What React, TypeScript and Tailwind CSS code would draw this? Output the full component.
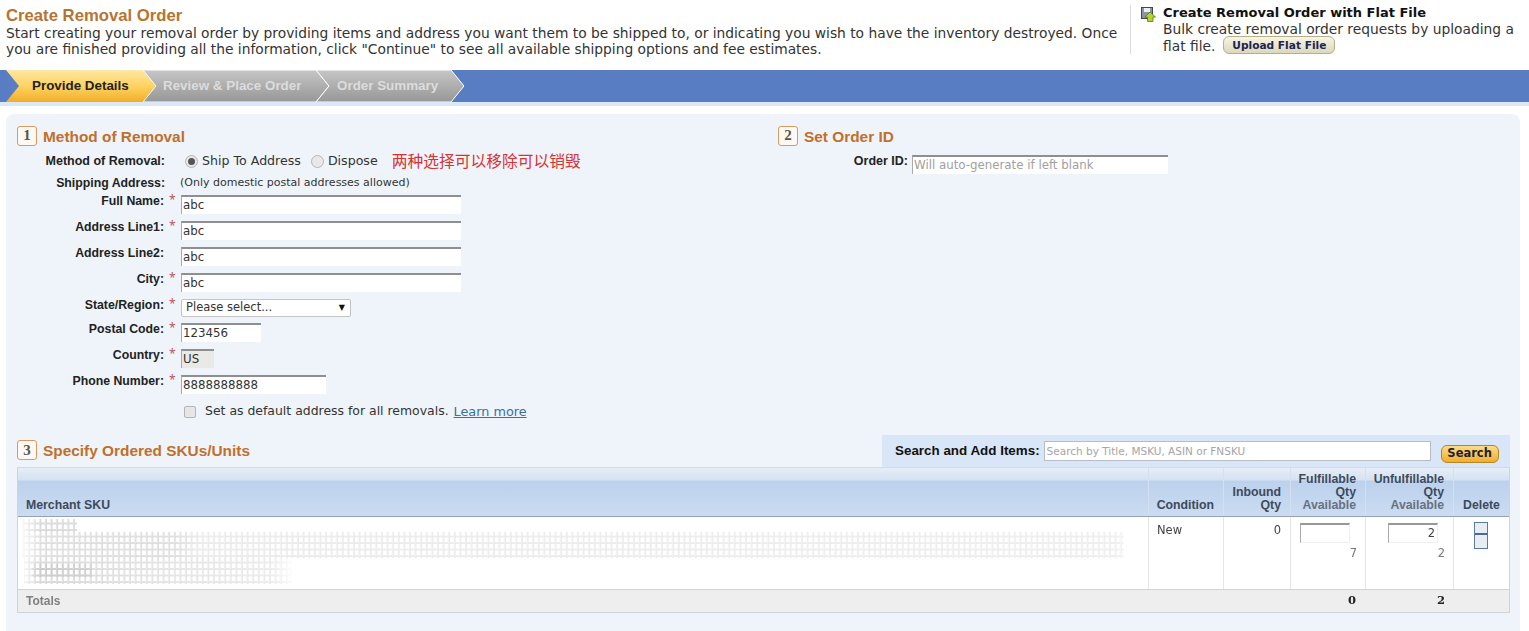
import React from "react";

const DEJAVU = "font-['DejaVu_Sans',sans-serif]";
const ARIAL = "font-['Liberation_Sans',Arial,sans-serif]";

const Step = ({
  label,
  active,
  width,
  textLeft,
}: {
  label: string;
  active?: boolean;
  width: number;
  textLeft: number;
}) => (
  <div className="relative h-[32px] -mr-[13px]" style={{ width }}>
    <svg className="absolute inset-0" width={width} height={32} viewBox={`0 0 ${width} 32`}>
      <defs>
        <linearGradient id="stepOn" x1="0" y1="0" x2="0" y2="1">
          <stop offset="0" stopColor="#ffe7a3" />
          <stop offset="0.55" stopColor="#fdd05c" />
          <stop offset="1" stopColor="#f2ad28" />
        </linearGradient>
        <linearGradient id="stepOff" x1="0" y1="0" x2="0" y2="1">
          <stop offset="0" stopColor="#c6c6c6" />
          <stop offset="1" stopColor="#979797" />
        </linearGradient>
      </defs>
      <polygon
        points={`0,0 ${width - 13},0 ${width},16 ${width - 13},32 0,32 13,16`}
        fill={active ? "url(#stepOn)" : "url(#stepOff)"}
        stroke="#ffffff"
        strokeWidth={active ? 0 : 1}
      />
    </svg>
    <span
      className={`absolute top-[6px] text-[13.4px] font-bold whitespace-nowrap ${ARIAL} ${
        active ? "text-[#222]" : "text-[#dcdcdc]"
      }`}
      style={{ left: textLeft }}
    >
      {label}
    </span>
  </div>
);

const Badge = ({ n }: { n: number }) => (
  <span className="flex h-[20px] w-[20px] items-center justify-center rounded-[3px] border border-[#d99a62] bg-[#fdf8f2] font-['Liberation_Serif',serif] text-[15px] font-bold text-[#555]">
    {n}
  </span>
);

const Heading = ({ n, title }: { n: number; title: string }) => (
  <div className="flex items-center gap-[6px]">
    <Badge n={n} />
    <h2 className={`translate-y-[1px] text-[15.4px] font-bold text-[#c0702a] ${ARIAL}`}>{title}</h2>
  </div>
);

const Label = ({ text, required = true }: { text: string; required?: boolean }) => (
  <>
    <span className={`-mt-[3px] w-[147px] text-right text-[12.3px] font-bold text-[#222] ${ARIAL}`}>{text}</span>
    <span className="-mt-[4px] w-[17px] pl-[5px] text-[12px] text-[#b55]">{required ? "*" : ""}</span>
  </>
);

const Field = ({
  label,
  required,
  value,
  width,
  grey,
}: {
  label: string;
  required?: boolean;
  value: string;
  width: number;
  grey?: boolean;
}) => (
  <div className="flex h-[26px]">
    <Label text={label} required={required} />
    <div
      className={`h-[19px] border-t-2 border-l border-t-[#8f8f8f] border-l-[#aaa] pl-[1px] text-[11.8px] leading-[17px] text-[#333] ${DEJAVU} ${
        grey ? "bg-[#e9e9e6]" : "bg-white"
      }`}
      style={{ width }}
    >
      {value}
    </div>
  </div>
);

const Radio = ({ on }: { on?: boolean }) => (
  <span className="flex h-[13px] w-[13px] items-center justify-center rounded-full border border-[#b5b5b5] bg-[#e8e8e8]">
    {on && <span className="h-[7px] w-[7px] rounded-full bg-[#555]" />}
  </span>
);

// the SKU text in the picture is blurred out, so it is drawn as a faded grid
const BlurredSku = () => (
  <svg width={1130} height={71} className="block">
    <defs>
      <pattern id="glyphs" width="5.6" height="6.5" patternUnits="userSpaceOnUse">
        <rect x="0.5" y="0.5" width="4.4" height="5.6" fill="none" stroke="#8a8a8a" strokeWidth="0.6" />
      </pattern>
      <linearGradient id="fadeLong" x1="0" y1="0" x2="1" y2="0">
        <stop offset="0" stopColor="#fff" stopOpacity="0" />
        <stop offset="0.02" stopColor="#fff" stopOpacity="0.42" />
        <stop offset="0.14" stopColor="#fff" stopOpacity="0.42" />
        <stop offset="0.16" stopColor="#fff" stopOpacity="0.26" />
        <stop offset="0.97" stopColor="#fff" stopOpacity="0.22" />
        <stop offset="0.995" stopColor="#fff" stopOpacity="0" />
      </linearGradient>
      <linearGradient id="fadeBottom" x1="0" y1="0" x2="1" y2="0">
        <stop offset="0" stopColor="#fff" stopOpacity="0" />
        <stop offset="0.08" stopColor="#fff" stopOpacity="0.5" />
        <stop offset="0.5" stopColor="#fff" stopOpacity="0.36" />
        <stop offset="0.9" stopColor="#fff" stopOpacity="0.26" />
        <stop offset="1" stopColor="#fff" stopOpacity="0" />
      </linearGradient>
      <mask id="maskLong">
        <rect width="1130" height="71" fill="url(#fadeLong)" />
      </mask>
      <mask id="maskBottom">
        <rect width="280" height="71" fill="url(#fadeBottom)" />
      </mask>
      <filter id="soft">
        <feGaussianBlur stdDeviation="0.45" />
      </filter>
    </defs>
    <g filter="url(#soft)">
      <g mask="url(#maskLong)">
        <rect x="4" y="15" width="1102" height="26" fill="url(#glyphs)" />
      </g>
      <g mask="url(#maskBottom)">
        <rect x="4" y="2" width="55" height="13" fill="url(#glyphs)" />
        <rect x="6" y="41" width="268" height="26" fill="url(#glyphs)" />
        <rect x="14" y="47" width="60" height="13" fill="url(#glyphs)" />
      </g>
    </g>
  </svg>
);

const Th = ({ className, children }: { className: string; children: React.ReactNode }) => (
  <div
    className={`flex flex-col justify-end border-r border-[#d5e0ef] pb-[4px] text-[12.3px] font-bold leading-[13px] text-[#3d4a5c] ${ARIAL} ${className}`}
  >
    {children}
  </div>
);

export default function App() {
  return (
    <div className="w-[1529px] h-[631px] overflow-hidden bg-white">
      {/* page header */}
      <div className="flex h-[70px]">
        <div className="w-[1130px] pl-[6px] pt-[6px]">
          <h1 className={`text-[16.7px] font-bold leading-[19px] text-[#b8732f] ${ARIAL}`}>Create Removal Order</h1>
          <p className={`whitespace-nowrap text-[13.8px] leading-[16px] text-[#333] ${DEJAVU}`}>
            Start creating your removal order by providing items and address you want them to be shipped to, or
            indicating you wish to have the inventory destroyed. Once
            <br />
            you are finished providing all the information, click "Continue" to see all available shipping options and
            fee estimates.
          </p>
        </div>
        <div className="mt-[5px] flex h-[49px] flex-1 gap-[7px] border-l border-[#ddd] pl-[10px]">
          <svg width={15} height={15} viewBox="0 0 15 15" className="mt-[2px] shrink-0">
            <rect x="0.5" y="0.5" width="11" height="11" fill="#8b95a3" stroke="#445" />
            <rect x="3" y="1" width="6" height="4" fill="#eee" />
            <polygon
              points="9,5 14.5,10 12,10 12,14.5 6.5,14.5 6.5,10 4,10"
              fill="#b5d334"
              stroke="#5c7a10"
              strokeWidth="0.8"
            />
          </svg>
          <div className={`text-[13.8px] leading-[16px] text-[#333] ${DEJAVU}`}>
            <div className="text-[13px] font-bold text-[#111]">Create Removal Order with Flat File</div>
            <div>Bulk create removal order requests by uploading a</div>
            <div className="flex items-center gap-[8px]">
              flat file.
              <button className="-mt-[1px] flex h-[18px] w-[112px] items-center justify-center rounded-[6px] border border-[#b5b08a] bg-gradient-to-b from-[#f7f5e6] to-[#dcd8b8] text-[10.6px] font-bold text-[#1a2455]">
                Upload Flat File
              </button>
            </div>
          </div>
        </div>
      </div>

      {/* steps */}
      <div className="flex h-[32px] bg-[#587dc3] pl-[6px]">
        <Step label="Provide Details" active width={150} textLeft={26} />
        <Step label="Review & Place Order" width={186} textLeft={20} />
        <Step label="Order Summary" width={148} textLeft={21} />
      </div>
      <div className="h-[4px] bg-[#dce7f7]" />

      {/* panel */}
      <div className="ml-[6px] mt-[8px] h-[517px] w-[1514px] rounded-t-[8px] bg-[#eff4fb] pl-[11px] pr-[10px] pt-[10px]">
        <div className="flex h-[311px]">
          <div className="w-[761px]">
            <Heading n={1} title="Method of Removal" />
            <div className="mt-[2px] flex h-[24px] items-center">
              <span className={`w-[148px] text-right text-[12.5px] font-bold text-[#222] ${ARIAL}`}>
                Method of Removal:
              </span>
              <div className={`ml-[20px] flex items-center gap-[4px] text-[12.6px] text-[#333] ${DEJAVU}`}>
                <Radio on />
                <span>Ship To Address</span>
                <span className="ml-[6px]">
                  <Radio />
                </span>
                <span>Dispose</span>
              </div>
              <span className="ml-[14px] font-['Noto_Sans_CJK_SC',sans-serif] text-[15.75px] text-[#d8312f]">
                两种选择可以移除可以销毁
              </span>
            </div>
            <div className="flex h-[21px] items-center">
              <span className={`w-[148px] text-right text-[12.3px] font-bold text-[#222] ${ARIAL}`}>
                Shipping Address:
              </span>
              <span className={`ml-[15px] text-[11px] text-[#333] ${DEJAVU}`}>
                (Only domestic postal addresses allowed)
              </span>
            </div>
            <div className="pt-[1px]">
              <Field label="Full Name:" value="abc" width={280} />
              <Field label="Address Line1:" value="abc" width={280} />
              <Field label="Address Line2:" required={false} value="abc" width={280} />
              <Field label="City:" value="abc" width={280} />
              <div className="flex h-[24px]">
                <Label text="State/Region:" />
                <div
                  className={`flex h-[18px] w-[170px] items-center justify-between rounded-[2px] border border-[#c4c4c4] bg-white pl-[4px] pr-[5px] text-[11.5px] text-[#333] ${DEJAVU}`}
                >
                  <span>Please select...</span>
                  <span className="text-[8px] text-[#111]">▼</span>
                </div>
              </div>
              <Field label="Postal Code:" value="123456" width={80} />
              <Field label="Country:" value="US" width={33} grey />
              <Field label="Phone Number:" value="8888888888" width={145} />
            </div>
            <div className={`mt-[1px] ml-[167px] flex items-center text-[#333] ${DEJAVU}`}>
              <span className="h-[12px] w-[12px] rounded-[2px] border border-[#b5b5b5] bg-[#e6e6e6]" />
              <span className="ml-[9px] text-[12.45px]">Set as default address for all removals.</span>
              <span className="ml-[5px] text-[12.8px] text-[#3a6f9e] underline">Learn more</span>
            </div>
          </div>
          <div className="flex-1">
            <Heading n={2} title="Set Order ID" />
            <div className="mt-[8px] flex">
              <span className={`-mt-[3px] w-[130px] text-right text-[12.5px] font-bold text-[#222] ${ARIAL}`}>
                Order ID:
              </span>
              <div
                className={`ml-[4px] h-[19px] w-[256px] border-t-2 border-l border-t-[#8f8f8f] border-l-[#aaa] bg-white pl-[1px] text-[11.8px] leading-[16px] text-[#a0a0a0] ${DEJAVU}`}
              >
                Will auto-generate if left blank
              </div>
            </div>
          </div>
        </div>

        {/* section 3 */}
        <div className="flex h-[32px] items-center justify-between">
          <div className="-mt-[2px]">
            <Heading n={3} title="Specify Ordered SKUs/Units" />
          </div>
          <div className="flex h-[32px] w-[628px] items-center bg-[#d9e6f8] pl-[13px]">
            <span className={`text-[13.4px] font-bold text-[#111] ${ARIAL}`}>Search and Add Items:</span>
            <div
              className={`ml-[4px] h-[20px] w-[387px] border border-[#b8bcc4] bg-white pl-[2px] text-[10.5px] leading-[18px] text-[#a5a5a5] ${DEJAVU}`}
            >
              Search by Title, MSKU, ASIN or FNSKU
            </div>
            <button
              className={`ml-[10px] mt-[5px] flex h-[18px] w-[58px] items-center justify-center rounded-[6px] border border-[#b5852a] bg-gradient-to-b from-[#fbdc83] to-[#f2ad28] text-[11.5px] font-bold text-[#1f1f33] ${DEJAVU}`}
            >
              Search
            </button>
          </div>
        </div>

        {/* table */}
        <div className="border-x border-b border-[#cfd4da]">
          <div className="grid h-[50px] grid-cols-[1131px_75px_67px_75px_88px_1fr] border-t border-b border-t-[#d0dbe8] border-b-[#93a3b5] bg-[linear-gradient(to_bottom,#e6edf6_0,#d5e2f3_12px,#bcd1ed_13px,#cbdcf1_100%)]">
            <Th className="pl-[8px]">Merchant SKU</Th>
            <Th className="items-end pr-[9px]">Condition</Th>
            <Th className="items-end pr-[9px] text-right">
              <span>Inbound</span>
              <span>Qty</span>
            </Th>
            <Th className="items-end pr-[9px] text-right">
              <span>Fulfillable</span>
              <span>Qty</span>
              <span className="text-[#68727f]">Available</span>
            </Th>
            <Th className="items-end pr-[9px] text-right">
              <span>Unfulfillable</span>
              <span>Qty</span>
              <span className="text-[#68727f]">Available</span>
            </Th>
            <Th className="items-center border-r-0">Delete</Th>
          </div>
          <div
            className={`grid h-[72px] grid-cols-[1131px_75px_67px_75px_88px_1fr] bg-white text-[11.5px] text-[#444] ${DEJAVU}`}
          >
            <div className="border-r border-[#e6e6e6]">
              <BlurredSku />
            </div>
            <div className="border-r border-[#e6e6e6] pl-[8px] pt-[5px]">New</div>
            <div className="border-r border-[#e6e6e6] pr-[9px] pt-[5px] text-right">0</div>
            <div className="flex flex-col items-end border-r border-[#e6e6e6] pr-[8px] pt-[6px]">
              <div className="mr-[7px] h-[20px] w-[50px] border border-[#eeeeee] border-t-2 border-t-[#999] border-l-[#aaa] bg-white" />
              <span className="mt-[2px] text-[#777]">7</span>
            </div>
            <div className="flex flex-col items-end border-r border-[#e6e6e6] pr-[8px] pt-[6px]">
              <div className="mr-[7px] h-[20px] w-[50px] border border-[#eeeeee] border-t-2 border-t-[#999] border-l-[#aaa] bg-white pr-[2px] text-right">
                2
              </div>
              <span className="mt-[2px] text-[#777]">2</span>
            </div>
            <div className="flex justify-center pr-[2px] pt-[5px]">
              <div className="flex h-[27px] w-[14px] flex-col border border-[#5d7a9c] bg-[#e8edf3]">
                <div className="h-[12px] border-b-2 border-[#4d6b8e]" />
              </div>
            </div>
          </div>
          <div className="grid h-[23px] grid-cols-[1131px_75px_67px_75px_88px_1fr] items-center border-t border-[#cfd4da] bg-[#eeeeee] text-[11.5px]">
            <span className={`pl-[8px] text-[12px] font-bold text-[#808080] ${ARIAL}`}>Totals</span>
            <span />
            <span />
            <span className="pr-[10px] text-right font-['DejaVu_Serif',serif] font-bold text-[#222]">0</span>
            <span className="pr-[9px] text-right font-['DejaVu_Serif',serif] font-bold text-[#222]">2</span>
            <span />
          </div>
        </div>
      </div>
    </div>
  );
}
